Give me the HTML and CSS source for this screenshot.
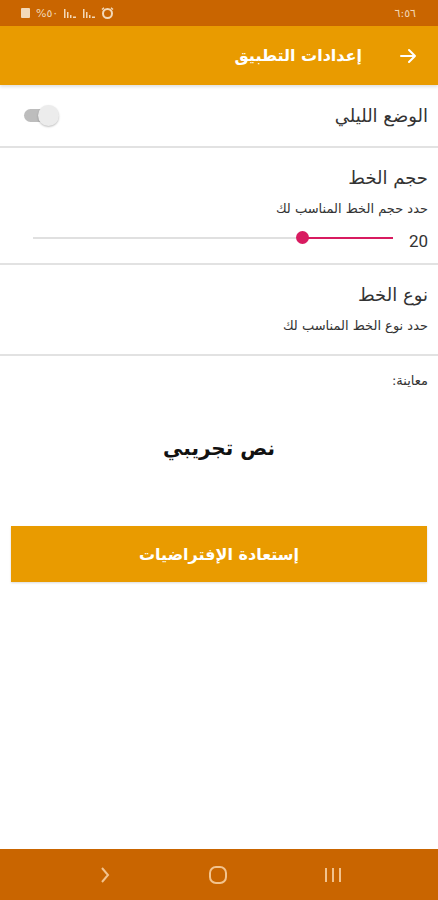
FILE: index.html
```html
<!DOCTYPE html>
<html lang="ar" dir="rtl">
<head>
  <meta charset="UTF-8">
  <title>إعدادات التطبيق</title>
  <meta name="viewport" content="width=device-width, initial-scale=1.0" />
  <link rel="stylesheet" href="styles.css">
</head>
<body>

  <div class="status-bar">
    <span class="time">٦:٥٦</span>
    <div class="status-icons">
      <svg width="11" height="12" viewBox="0 0 11 12"><rect x="1" y="1" width="9" height="10" rx="1" fill="#f3d9b8"/></svg>
      <span>%٥٠</span>
      <svg width="14" height="12" viewBox="0 0 14 12"><rect x="1" y="2" width="1.5" height="9" fill="#f3d9b8"/><rect x="4" y="5" width="1.5" height="6" fill="#f3d9b8"/><rect x="7" y="8" width="1.5" height="3" fill="#f3d9b8"/><rect x="10" y="9.5" width="3" height="1.5" fill="#f3d9b8"/></svg>
      <svg width="14" height="12" viewBox="0 0 14 12"><rect x="1" y="2" width="1.5" height="9" fill="#f3d9b8"/><rect x="4" y="5" width="1.5" height="6" fill="#f3d9b8"/><rect x="7" y="8" width="1.5" height="3" fill="#f3d9b8"/><rect x="10" y="9.5" width="3" height="1.5" fill="#f3d9b8"/></svg>
      <svg width="13" height="12" viewBox="0 0 13 12"><circle cx="6.5" cy="6.5" r="4.5" fill="none" stroke="#f3d9b8" stroke-width="2"/><path d="M1 2.5 L3 0.8 M12 2.5 L10 0.8" stroke="#f3d9b8" stroke-width="1.5"/></svg>
    </div>
  </div>

  <header class="app-bar">
    <svg class="back" width="20" height="20" viewBox="0 0 20 20"><path d="M3 10 H17 M11 4 L17 10 L11 16" fill="none" stroke="#fff" stroke-width="2" stroke-linecap="round" stroke-linejoin="round"/></svg>
    <h1>إعدادات التطبيق</h1>
  </header>

  <main>
    <section class="row night">
      <span class="row-title">الوضع الليلي</span>
      <div class="toggle"><div class="knob"></div></div>
    </section>

    <section class="row block size">
      <div class="row-title">حجم الخط</div>
      <div class="row-sub">حدد حجم الخط المناسب لك</div>
      <div class="slider-line">
        <span class="value">20</span>
        <div class="track">
          <div class="fill" style="width: 25%"></div>
          <div class="thumb" style="right: 25%"></div>
        </div>
      </div>
    </section>

    <section class="row block type">
      <div class="row-title">نوع الخط</div>
      <div class="row-sub">حدد نوع الخط المناسب لك</div>
    </section>

    <div class="preview-label">معاينة:</div>
    <div class="preview-text">نص تجريبي</div>

    <button class="reset">إستعادة الإفتراضيات</button>
  </main>

  <nav class="nav-bar">
    <svg width="16" height="20" viewBox="0 0 16 20"><path d="M5 3 L11 10 L5 17" fill="none" stroke="#f2c38e" stroke-width="2"/></svg>
    <svg width="20" height="20" viewBox="0 0 20 20"><rect x="2" y="2" width="16" height="16" rx="6" fill="none" stroke="#f2c38e" stroke-width="2"/></svg>
    <svg width="20" height="20" viewBox="0 0 20 20"><path d="M3 3 V17 M10 3 V17 M17 3 V17" stroke="#f2c38e" stroke-width="2"/></svg>
  </nav>

</body>
</html>
```

FILE: styles.css
```css
body {
  margin: 0;
  width: 438px;
  height: 900px;
  font-family: 'DejaVu Sans', sans-serif;
  background-color: #fff;
  color: #333;
  display: flex;
  flex-direction: column;
}

.status-bar {
  height: 26px;
  background-color: #c96500;
  color: #f3d9b8;
  display: flex;
  align-items: center;
  justify-content: space-between;
  padding: 0 22px 0 20px;
  font-size: 11px;
}

.status-icons {
  display: flex;
  align-items: center;
  gap: 5px;
  direction: ltr;
}

.app-bar {
  height: 59px;
  background-color: #e99b00;
  display: flex;
  align-items: center;
  padding: 0 20px;
  gap: 36px;
  box-shadow: 0 2px 3px rgba(0, 0, 0, 0.12);
}

.app-bar h1 {
  margin: 0;
  color: #fff;
  font-size: 16px;
  font-weight: bold;
}

main {
  flex: 1;
}

.row {
  border-bottom: 2px solid #e2e2e2;
  padding: 0 10px 0 22px;
}

.night {
  height: 61px;
  display: flex;
  align-items: center;
  justify-content: space-between;
}

.row-title {
  font-size: 18px;
  color: #333;
}

.toggle {
  width: 34px;
  height: 13px;
  background-color: #bdbdbd;
  border-radius: 7px;
  position: relative;
  margin-left: 2px;
}

.knob {
  position: absolute;
  left: 14px;
  top: -4px;
  width: 21px;
  height: 21px;
  border-radius: 50%;
  background-color: #ececec;
  box-shadow: 0 1px 2px rgba(0, 0, 0, 0.25);
}

.block {
  padding-top: 19px;
  box-sizing: border-box;
}

.size {
  height: 117px;
}

.type {
  height: 91px;
}

.block .row-sub {
  font-size: 13px;
  color: #333;
  margin-top: 13px;
}

.slider-line {
  display: flex;
  align-items: center;
  margin-top: 8px;
  gap: 16px;
}

.value {
  font-family: 'Roboto', sans-serif;
  font-size: 17px;
  color: #333;
  direction: ltr;
  margin-top: 7px;
}

.track {
  width: 360px;
  height: 2px;
  background-color: #e0e0e0;
  position: relative;
}

.fill {
  position: absolute;
  right: 0;
  top: 0;
  height: 2px;
  background-color: #d81b60;
}

.thumb {
  position: absolute;
  top: -6px;
  width: 13px;
  height: 13px;
  margin-right: -6px;
  border-radius: 50%;
  background-color: #d81b60;
}

.preview-label {
  font-size: 13px;
  padding: 17px 10px 0 0;
}

.preview-text {
  text-align: center;
  font-size: 20px;
  font-weight: bold;
  color: #111;
  margin-top: 48px;
}

.reset {
  display: block;
  width: 416px;
  height: 56px;
  margin: 66px 11px 0;
  border: none;
  background-color: #e99b00;
  color: #fff;
  font-family: 'DejaVu Sans', sans-serif;
  font-size: 16px;
  font-weight: bold;
  box-shadow: 0 1px 2px rgba(0, 0, 0, 0.15);
}

.nav-bar {
  height: 51px;
  background-color: #c96500;
  display: flex;
  direction: ltr;
  align-items: center;
  justify-content: space-between;
  padding: 0 95px 0 97px;
}
```
